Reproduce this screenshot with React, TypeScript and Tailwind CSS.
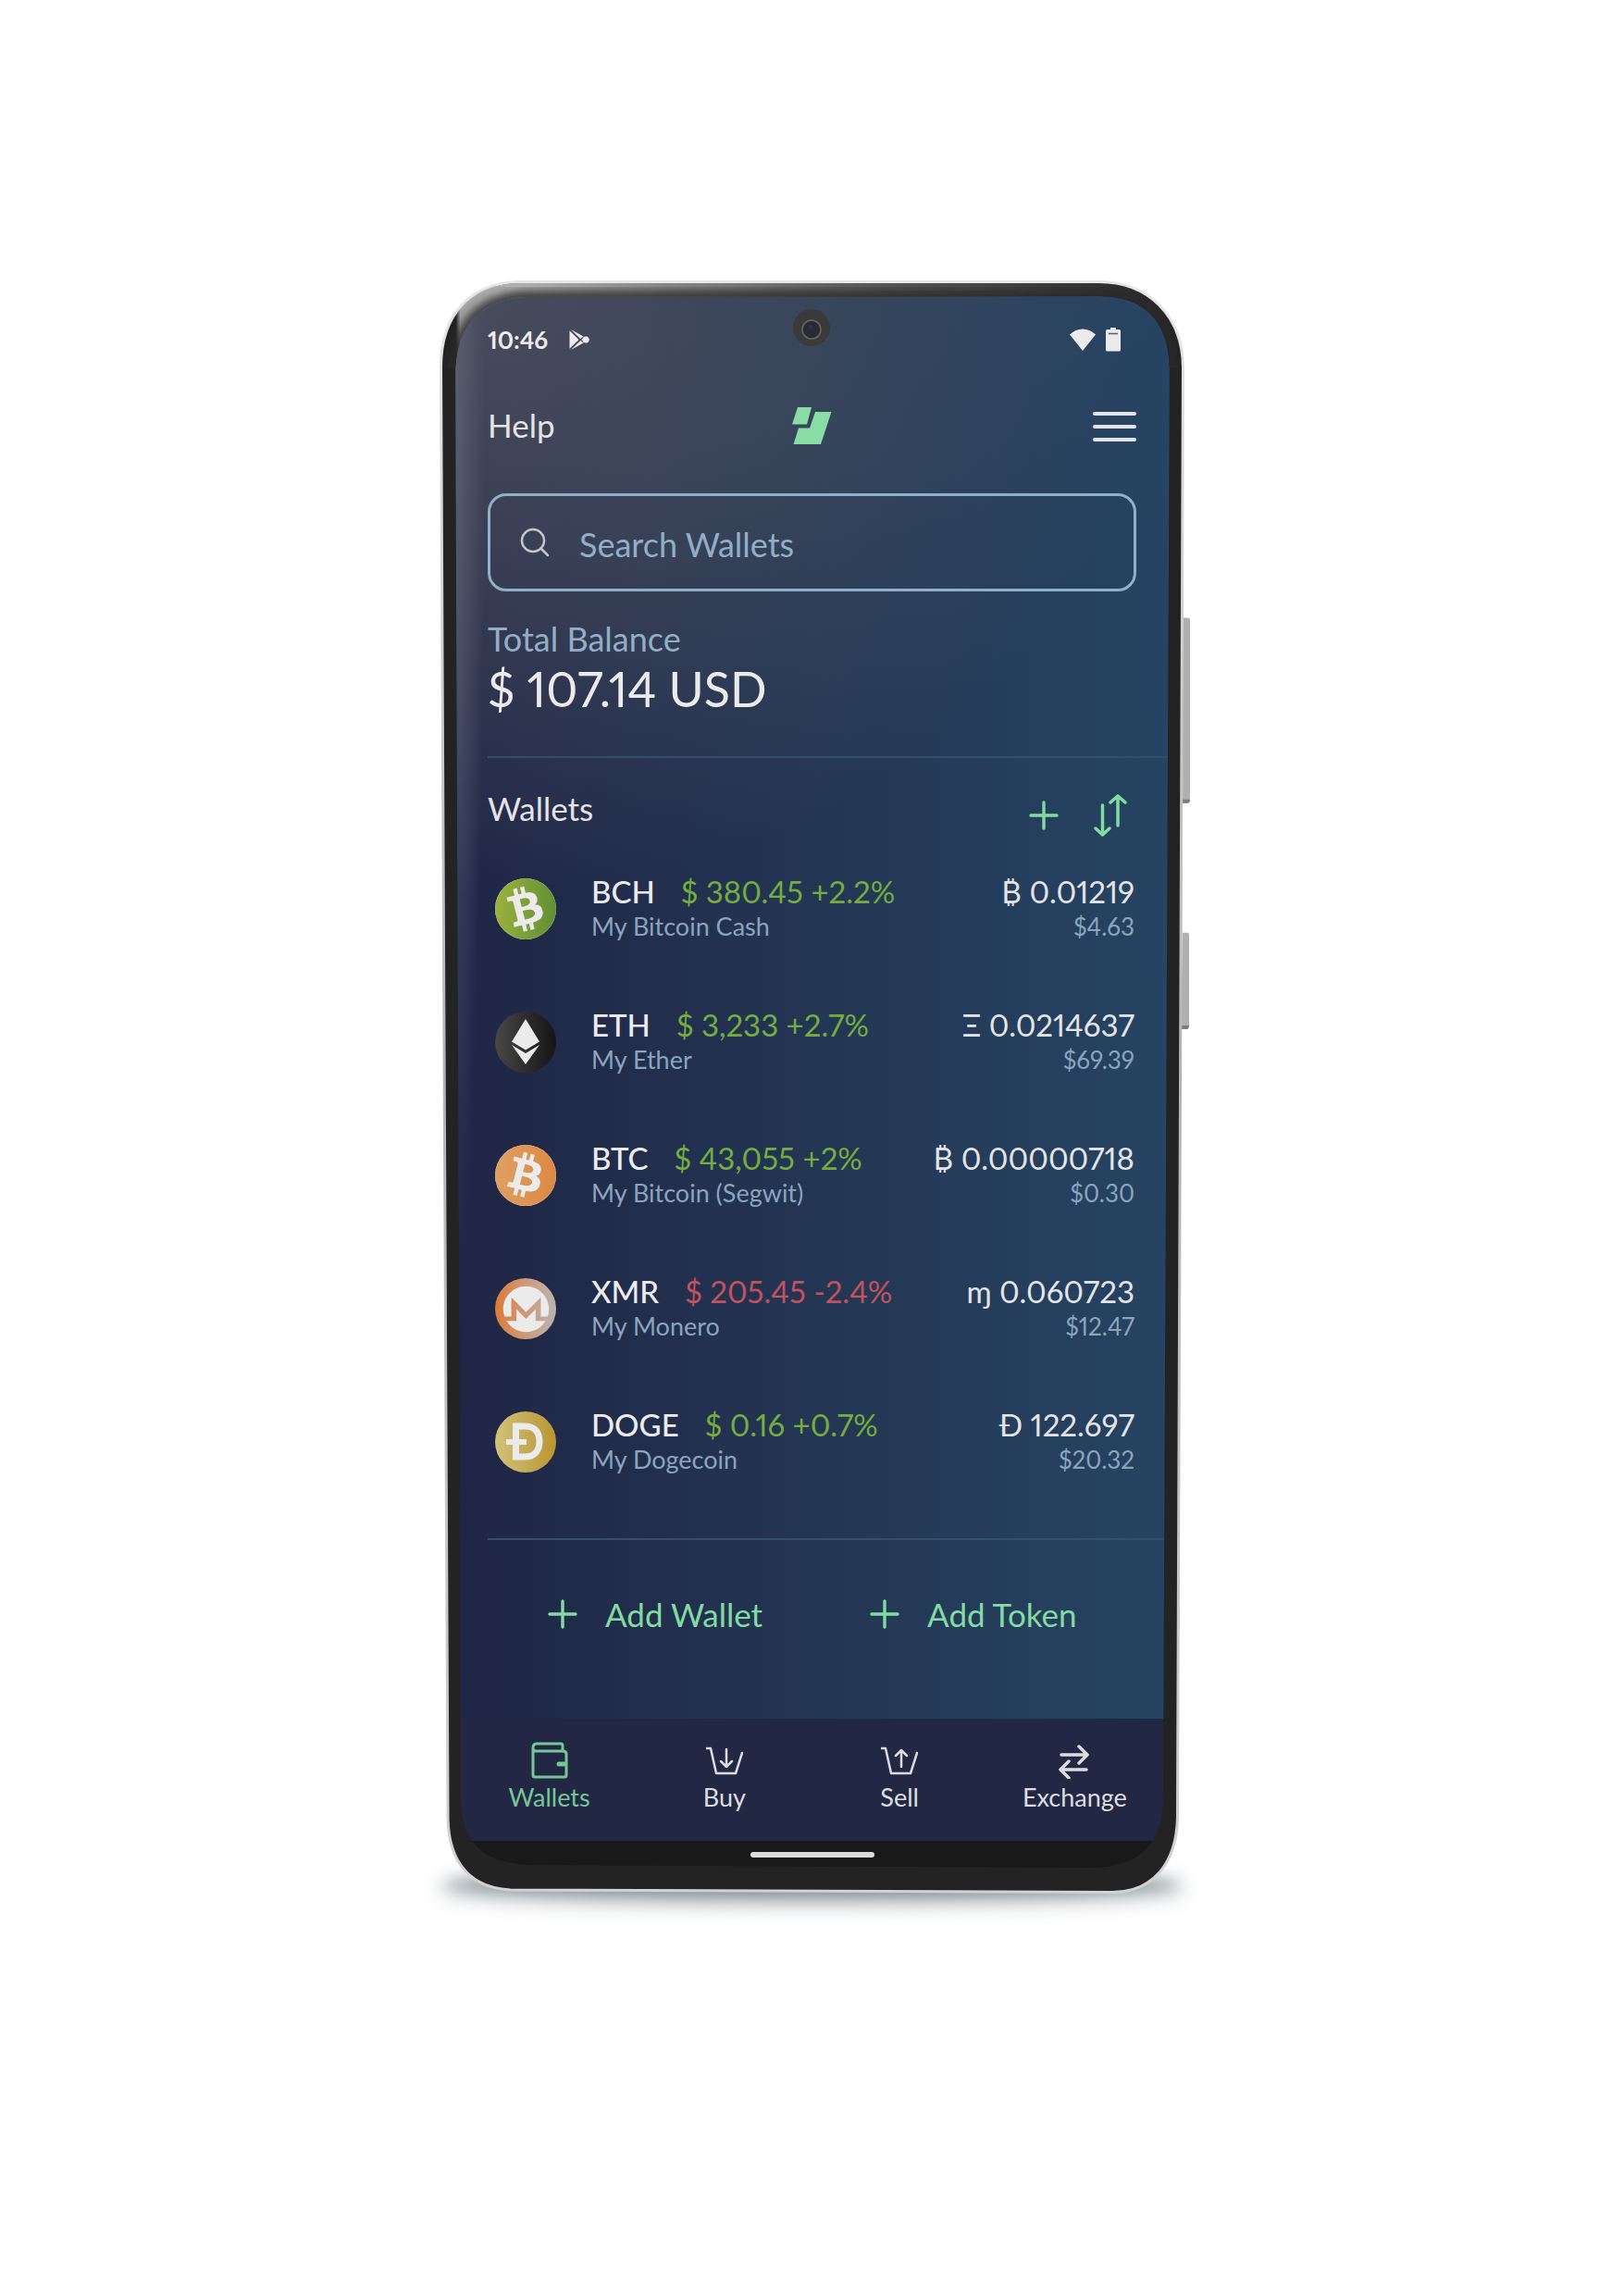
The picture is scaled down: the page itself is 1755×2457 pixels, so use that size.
import React from "react";
import { FaBitcoin, FaMonero } from "react-icons/fa";

const coinBase = "relative flex size-[66px] shrink-0 items-center justify-center overflow-hidden rounded-full";

function BitcoinCash() {
  return (
    <span className={`${coinBase} bg-[#ebebeb]`}>
      <svg className="absolute size-0" aria-hidden="true">
        <linearGradient id="bch" x1="0.1" y1="0.25" x2="0.9" y2="0.75">
          <stop offset="0" stopColor="#9fb33e" />
          <stop offset="1" stopColor="#5c8e35" />
        </linearGradient>
      </svg>
      <FaBitcoin className="size-20 shrink-0 -rotate-[28deg]" style={{ fill: "url(#bch)" }} />
    </span>
  );
}

function Bitcoin() {
  return (
    <span className={`${coinBase} bg-[#ebebeb]`}>
      <svg className="absolute size-0" aria-hidden="true">
        <linearGradient id="btc">
          <stop offset="0" stopColor="#dfa266" />
          <stop offset="1" stopColor="#db8741" />
        </linearGradient>
      </svg>
      <FaBitcoin className="size-20 shrink-0" style={{ fill: "url(#btc)" }} />
    </span>
  );
}

function Ether() {
  return (
    <span className={`${coinBase} bg-linear-to-r from-[#484848] to-[#151515]`}>
      <svg viewBox="0 0 66 66" className="size-full fill-[#ebebeb]" aria-hidden="true">
        <path d="M33 8 48 32.5 33 41.5 18 32.5ZM18 36 33 45 48 36 33 57Z" />
      </svg>
    </span>
  );
}

function Monero() {
  return (
    <span className={`${coinBase} bg-linear-to-r from-[#dc7a34] to-[#b8b5ae]`}>
      <FaMonero className="size-[51px] text-[#ebebeb]" />
    </span>
  );
}

function Doge() {
  return (
    <span className={`${coinBase} bg-linear-to-r from-[#d2c278] to-[#b8952f]`}>
      <svg viewBox="0 0 66 66" className="size-full" fill="none" stroke="#ebebeb" aria-hidden="true">
        <path d="M22.5 16H32C43 16 48 23 48 32.5S43 49 32 49H22.5Z" strokeWidth="7" />
        <path d="M12 33H34" strokeWidth="6" />
      </svg>
    </span>
  );
}

function Plus() {
  return (
    <svg viewBox="0 0 32 32" className="size-8 shrink-0" fill="none" stroke="currentColor" strokeWidth="3.4" strokeLinecap="round" aria-hidden="true">
      <path d="M16 2V30M2 16H30" />
    </svg>
  );
}

const wallets = [
  { code: "BCH", price: "$ 380.45 +2.2%", up: true, name: "My Bitcoin Cash", sign: "₿", amount: "0.01219", fiat: "$4.63", icon: <BitcoinCash /> },
  { code: "ETH", price: "$ 3,233 +2.7%", up: true, name: "My Ether", sign: "Ξ", amount: "0.0214637", fiat: "$69.39", icon: <Ether /> },
  { code: "BTC", price: "$ 43,055 +2%", up: true, name: "My Bitcoin (Segwit)", sign: "₿", amount: "0.00000718", fiat: "$0.30", icon: <Bitcoin /> },
  { code: "XMR", price: "$ 205.45 -2.4%", up: false, name: "My Monero", sign: "ɱ", amount: "0.060723", fiat: "$12.47", icon: <Monero /> },
  { code: "DOGE", price: "$ 0.16 +0.7%", up: true, name: "My Dogecoin", sign: "Ð", amount: "122.697", fiat: "$20.32", icon: <Doge /> },
];

function StatusBar() {
  return (
    <div className="flex h-[94px] items-center justify-between pr-[52px] pl-9 text-[#ebebeb]">
      <div className="flex items-center gap-[22px]">
        <span className="text-[26px] font-bold">10:46</span>
        <svg viewBox="0 0 24 24" className="size-6" fill="currentColor" aria-hidden="true">
          <path d="M1.500 2.200 11.600 12 1.500 21.800Z" />
          <path d="M3 1 16.500 8.600 13.200 11ZM3 23 16.500 15.400 13.200 13Z" />
          <circle cx="19" cy="12" r="3.600" />
          <path d="M14 12 20 8.500 23 12 20 15.500Z" />
        </svg>
      </div>
      <div className="flex items-center gap-2">
        <svg viewBox="0 0 32 28" className="h-7 w-8" fill="currentColor" aria-hidden="true">
          <path d="M16 26 2 8.500C10 .5 22 .5 30 8.500Z" />
        </svg>
        <svg viewBox="0 0 18 28" className="h-7 w-[18px]" fill="currentColor" aria-hidden="true">
          <path d="M6 1H12V3H15.500Q17 3 17 4.500V25Q17 26.500 15.500 26.500H2.500Q1 26.500 1 25V4.500Q1 3 2.500 3H6Z" />
          <path d="M4 7.500H14" stroke="#4a6282" strokeWidth="1.500" />
        </svg>
      </div>
    </div>
  );
}

function Bezel() {
  return (
    <svg viewBox="0 0 801 1741" preserveAspectRatio="none" className="pointer-events-none absolute inset-0 size-full overflow-visible" aria-hidden="true">
      <defs>
        <linearGradient id="bezelTop">
          <stop offset="0.022" stopColor="#232323" />
          <stop offset="0.028" stopColor="#a6a6a6" />
          <stop offset="0.1" stopColor="#b0b0b0" />
          <stop offset="0.3" stopColor="#868686" />
          <stop offset="0.6" stopColor="#555" />
          <stop offset="0.9" stopColor="#303030" />
          <stop offset="1" stopColor="#222" />
        </linearGradient>
        <linearGradient id="edge" x1="0" y1="0" x2="0" y2="1">
          <stop offset="0" stopColor="#e6e6e6" />
          <stop offset="0.5" stopColor="#b4b4b4" />
          <stop offset="1" stopColor="#d2d2d2" />
        </linearGradient>
        <filter id="soft" x="-10%" y="-10%" width="120%" height="120%">
          <feGaussianBlur stdDeviation="5" />
        </filter>
        <clipPath id="topClip">
          <path d="M3 94C3 40 30 3 88 3H709C762 3 798 40 799 94H785C784 44 758 17 709 17L98 18C48 18 20 46 17 94Z" />
        </clipPath>
      </defs>
      <path d="M799 364H805Q807 364 807 367V560Q807 564 804 564H798ZM799 704H804Q806 704 806 707V804Q806 808 803 808H797Z" fill="#b0b0b0" />
      <path d="M799 560H807Q807 564 804 564H798ZM797 804H806Q806 808 803 808H797Z" fill="#7c7c7c" />
      <path
        fillRule="evenodd"
        fill="#232323"
        d="M2 94C2 36 34 2 88 2H709C762 2 799 38 799.500 94L793 1660C792 1708 768 1739 724 1739.500L76 1737C34 1735 10 1708 9 1660ZM17 94 23 1640C24 1688 50 1710 100 1710L700 1713C750 1713 777 1690 778 1640L785 94C784 44 758 17 709 17L98 18C48 18 20 46 17 94Z"
      />
      <g clipPath="url(#topClip)">
        <rect width="801" height="98" fill="url(#bezelTop)" />
        <path d="M17 110V94C20 46 48 18 98 18L709 17C758 17 784 44 785 94V110" fill="none" stroke="#2a2a2a" strokeOpacity="0.85" strokeWidth="14" filter="url(#soft)" />
      </g>
      <path d="M1.500 94C1.500 36 34 1.500 88 1.500H709C762 1.500 799 38 799.500 94L793.500 1660C792 1708 768 1739 724 1739.500L76 1737C34 1735 10 1708 9 1660Z" fill="none" stroke="url(#edge)" strokeWidth="3" />
      <g>
        <circle cx="400" cy="51" r="20" fill="#3a3a3a" />
        <circle cx="400" cy="53" r="10" fill="#2a2b30" stroke="#666" strokeWidth="1.500" />
        <circle cx="399" cy="50" r="2" fill="#33345c" />
      </g>
    </svg>
  );
}

const tabs = [
  {
    label: "Wallets",
    icon: (
      <>
        <path d="M2 7V36Q2 38 4 38H36Q38 38 38 36V13Q38 10 34 10H5Q2 10 2 6.500Q2 2 6 2H32Q34 2 34 4V10" strokeWidth="3" />
        <path d="M36 24H30" strokeWidth="5" />
      </>
    ),
  },
  { label: "Buy", icon: <path d="M0 7H5L11 34H32L39 12M22 8V27M16 21 22 27 28 21" strokeWidth="2.500" /> },
  { label: "Sell", icon: <path d="M0 7H5L11 34H32L39 12M22 27V9M16 15 22 9 28 15" strokeWidth="2.500" /> },
  { label: "Exchange", icon: <path d="M6 14H34M25 5 34 14 25 23M33 30H5M14 21 5 30 14 39" strokeWidth="3.500" /> },
];

export default function App() {
  return (
    <main className="min-h-screen bg-white px-4 py-[303px] font-['Lato',sans-serif]">
      <div className="relative mx-auto w-full max-w-[805px] px-4 pt-[17px] pb-[27px]">
        <div className="absolute right-1 bottom-0 left-1 h-5 rounded-[50%] bg-[#7b878c] shadow-[0_4px_18px_4px_#8a969b] blur-sm" />
        <div className="relative overflow-hidden rounded-[56px] bg-[#191919] text-[35px] leading-10 text-[#e4e4e6] proportional-nums">
          <div className="bg-[radial-gradient(100%_650px_at_0_0,#72727280,#7272724d_45%,transparent),radial-gradient(32px_900px_at_0_200px,#4a4f6c,transparent),linear-gradient(90deg,#1f2545,#233653_50%,#264463)]">
            <StatusBar />
            <header className="grid h-[92px] grid-cols-3 items-center pr-9 pl-9">
              <a href="#help" className="justify-self-start pb-[3px]">Help</a>
              <svg viewBox="0 0 44 42" className="h-[42px] w-11 justify-self-center" fill="#88dca4" role="img" aria-label="Edge">
                <path d="M7 1H22L17 19.500H1ZM26 6H43.500L32 41H2.500L8 23.500H20Z" />
              </svg>
              <button aria-label="Menu" className="flex w-[47px] flex-col gap-[10px] justify-self-end pt-0.5">
                <span className="h-1 rounded-sm bg-[#e4e4e6]" />
                <span className="h-1 rounded-sm bg-[#e4e4e6]" />
                <span className="h-1 rounded-sm bg-[#e4e4e6]" />
              </button>
            </header>

            <div className="mr-9 ml-9 pt-[27px]">
              <label className="flex h-[106px] items-center gap-8 rounded-[20px] border-[3px] border-[#8fb0c8] px-8">
                <svg viewBox="0 0 32 32" className="size-8 shrink-0" fill="none" stroke="#c4c6cc" strokeWidth="2.500" strokeLinecap="round" aria-hidden="true">
                  <circle cx="14" cy="14" r="12" />
                  <path d="M22.500 22.500 30 30" />
                </svg>
                <input type="search" placeholder="Search Wallets" aria-label="Search Wallets" className="min-w-0 flex-1 pt-1 text-[36px] outline-none placeholder:text-[#92aec6]" />
              </label>
            </div>

            <section className="ml-9 border-b-2 border-[#33506b] pt-[31px] pb-[41px]">
              <h2 className="text-[36px] text-[#92aec6]">Total Balance</h2>
              <p className="pt-0.5 text-[52px] leading-16 text-[#ebebeb]">$ 107.14 USD</p>
            </section>

            <section className="ml-9 border-b-2 border-[#33506b] pb-[70px]">
              <div className="flex items-center justify-between pt-[34px] pr-[46px]">
                <h2 className="pb-4">Wallets</h2>
                <div className="flex items-center gap-[38px] text-[#82dba0]">
                  <button aria-label="Add wallet"><Plus /></button>
                  <button aria-label="Sort wallets">
                    <svg viewBox="0 0 36 48" className="h-12 w-9" fill="none" stroke="currentColor" strokeWidth="3.500" strokeLinecap="round" strokeLinejoin="round" aria-hidden="true">
                      <path d="M9.500 13V45M2 38 9.500 45 17 38M26 35V3M18 10 26 3 34 10" />
                    </svg>
                  </button>
                </div>
              </div>
              <ul className="flex flex-col gap-[68px] pt-[31px] pr-[38px]">
                {wallets.map((w) => (
                  <li key={w.code} className="flex h-[76px] items-start gap-[38px] pl-2">
                    <div className="pt-[9px]">{w.icon}</div>
                    <div className="flex-1 pt-[3px] text-[33px] whitespace-nowrap">
                      <div className="flex gap-7">
                        <span className="font-medium text-[#ebebeb]">{w.code}</span>
                        <span className={w.up ? "text-[#74ac40]" : "text-[#c3515e]"}>{w.price}</span>
                      </div>
                      <div className="text-[27px] leading-9 text-[#8aa4be]">{w.name}</div>
                    </div>
                    <div className="pt-[3px] text-right text-[33px] whitespace-nowrap">
                      <div className="text-[#e4e4e6]"><span className="font-['Lato','Inter','Noto_Sans',sans-serif]">{w.sign}</span> {w.amount}</div>
                      <div className="text-[26px] leading-9 text-[#8aa4be]">{w.fiat}</div>
                    </div>
                  </li>
                ))}
              </ul>
            </section>

            <div className="flex h-[193px] items-center gap-[116px] pb-[34px] pl-[101px] text-[#82dba0]">
              <button className="flex items-center gap-[30px]"><Plus />Add Wallet</button>
              <button className="flex items-center gap-[30px]"><Plus />Add Token</button>
            </div>
          </div>

          <nav className="grid h-[132px] grid-cols-4 content-start bg-[#222844] px-2 pt-[25px]">
            {tabs.map((t, i) => (
              <button key={t.label} className={`flex flex-col items-center gap-1 text-[27px] leading-8 ${i === 0 ? "text-[#75c796]" : "text-[#dcdce0]"}`}>
                <svg viewBox="0 0 40 40" className="size-10" fill="none" stroke="currentColor" strokeLinecap="round" strokeLinejoin="round" aria-hidden="true">
                  {t.icon}
                </svg>
                {t.label}
              </button>
            ))}
          </nav>
          <div className="flex h-[30px] items-center justify-center">
            <span className="h-1.5 w-[134px] rounded-full bg-[#dcdcdc]" />
          </div>
        </div>
        <Bezel />
      </div>
    </main>
  );
}
